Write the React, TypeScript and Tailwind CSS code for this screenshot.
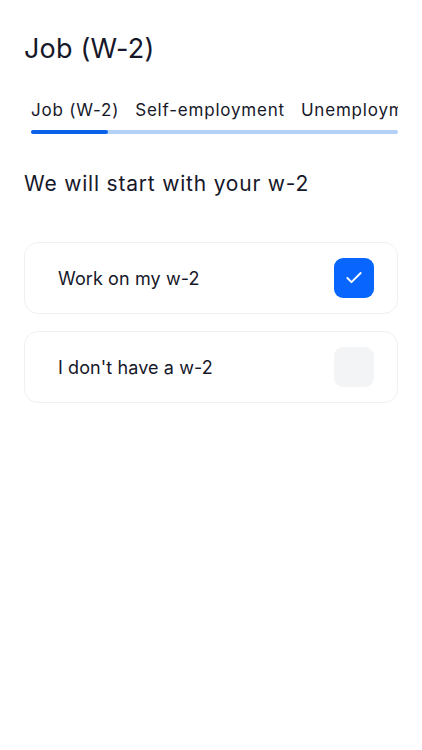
import { Check } from "lucide-react";

const tabs = ["Job (W-2)", "Self-employment", "Unemployment"];

interface OptionProps {
  label: string;
  checked?: boolean;
}

function Option({ label, checked = false }: OptionProps) {
  return (
    <div className="flex h-[72px] items-center justify-between rounded-[14px] border border-[#eef0f3] pl-[33px] pr-[23px]">
      <span className="text-[18px] tracking-[0.1px] text-[#16182a]">{label}</span>
      {checked ? (
        <div className="flex h-[40px] w-[40px] items-center justify-center rounded-[9px] bg-[#0866ff]">
          <Check className="h-5 w-5 text-white" strokeWidth={2.2} />
        </div>
      ) : (
        <div className="h-[40px] w-[40px] rounded-[9px] bg-[#f3f4f6]" />
      )}
    </div>
  );
}

export default function App() {
  return (
    <div
      className="min-h-[750px] bg-white px-6 pt-[32px]"
      style={{ fontFamily: "Inter, 'Noto Sans', sans-serif" }}
    >
      <h1 className="text-[27px] leading-[34px] tracking-[0.2px] text-[#16182a]">Job (W-2)</h1>

      <div className="ml-[7px] mt-[32px] overflow-hidden">
        <div className="flex gap-4 whitespace-nowrap text-[17px] leading-[24px] tracking-[0.8px] text-[#16182a]">
          {tabs.map((tab) => (
            <span key={tab}>{tab}</span>
          ))}
        </div>
        <div className="mt-[8px] flex h-[4px] rounded-full bg-[#b3d0f6]">
          <div className="w-[77px] rounded-full bg-[#0a62e8]" />
        </div>
      </div>

      <h2 className="mt-[36px] text-[21px] leading-[28px] tracking-[0.8px] text-[#16182a]">
        We will start with your w-2
      </h2>

      <div className="mt-[44px] flex flex-col gap-[17px]">
        <Option label="Work on my w-2" checked />
        <Option label="I don't have a w-2" />
      </div>
    </div>
  );
}
